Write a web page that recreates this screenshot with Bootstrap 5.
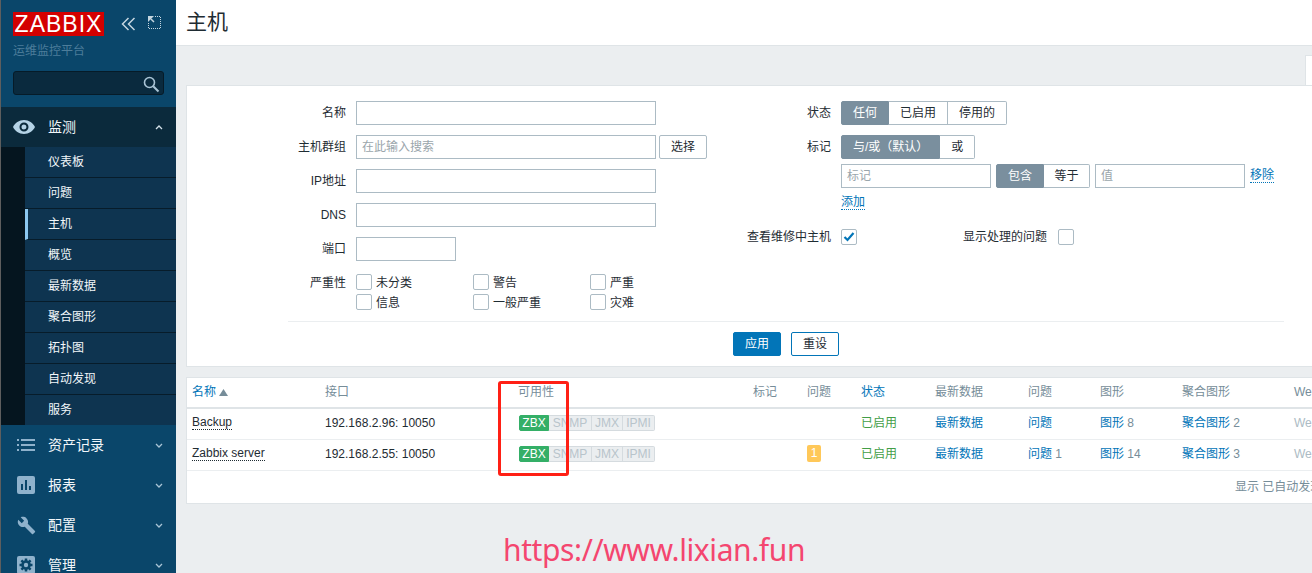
<!DOCTYPE html>
<html lang="zh-CN"><head><meta charset="utf-8"><title>主机</title>
<link href="https://cdn.jsdelivr.net/npm/bootstrap@5.3.0/dist/css/bootstrap.min.css" rel="stylesheet">
<style>
html,body{height:573px;overflow:hidden}
body{font-family:Arial,"Liberation Sans","Noto Sans CJK SC",sans-serif;font-size:12px;line-height:14px;color:#1f2c33;background:#ebeef0;position:relative}
a{text-decoration:none}
.shell{height:573px}
.side{width:176px;flex:none;background:#0a466a;color:#f2f7fa;border-left:1px solid #5e5e5e;height:573px;overflow:hidden}
.brand{height:107px;padding:12px 0 0 12px}
.logo{display:inline-block;background:#d40000;color:#fff;font-size:23px;line-height:24px;height:24px;width:91px;text-align:center;letter-spacing:1px}
.sub{color:#4d7d9a;font-size:12px;margin-top:8px;line-height:15px}
.sbox{width:151px;height:24px;margin-top:12px;background:#0a2a3e;border:1px solid #061b28;border-radius:3px;position:relative}
.sbox svg{position:absolute;right:3px;top:3px}
.tools{position:absolute;left:120px;top:16px}
.mhead{height:40px;display:flex;align-items:center;font-size:14px;color:#f2f7fa;padding-left:12px}
.mhead.on{background:#0b2a3c}
.mhead .ico{width:35px;flex:none;display:flex}
.mhead .car{margin-left:auto;margin-right:13px;display:flex}
.subwrap{background:#05151f;padding-left:24px}
.sitem{display:block;height:31px;line-height:30px;padding-left:23px;background:#0e3450;color:#f2f7fa;font-size:12px;border-bottom:1px solid #071c2a}
.sitem:last-child{border-bottom:0;height:30px}
.sitem.on{border-left:3px solid #8cc8f0;padding-left:20px}
.main{flex:1;min-width:0}
.topbar{height:46px;background:#fff;border-bottom:1px solid #dfe4e7;padding-left:10px;font-size:21px;line-height:44px;color:#1f2c33;font-weight:400}
.tabgap{height:39px;position:relative}
.tabcorner{position:absolute;right:0;top:9px;width:7px;height:31px;background:#fff;border-top:1px solid #dfe4e7;border-left:1px solid #dfe4e7}
.panel{margin-left:10px;background:#fff;border:1px solid #dfe4e7;border-right:0}
.filter{height:282px;position:relative}
.fcols{height:238px;padding-top:15px}
.fcol1{width:545px;flex:none}
.frow{display:flex;align-items:center;min-height:24px;margin-bottom:10px}
.flabel{width:169px;flex:none;text-align:right;padding-right:10px;color:#1f2c33}
.sevrow .flabel{line-height:19px}
.finput{height:24px;border:1px solid #acbbc4;background:#fff;padding:0 5px;line-height:23px;color:#9aa5ab;border-radius:0}
.w300{width:300px}.w100{width:100px}.w150{width:150px}
.gap5{margin-left:5px}
.bwhite{height:24px;border:1px solid #acbbc4;border-radius:2px;background:#fff;color:#1f2c33;padding:0 11px;line-height:22px;margin-left:3px}
.sevrow{margin-top:13px}
.sevs{display:grid;grid-template-columns:117px 117px 117px;row-gap:4px}
.sev{display:flex;align-items:flex-start;height:16px;line-height:19px}
.cb{width:16px;height:16px;border:1px solid #acbbc4;border-radius:2px;background:#fff;flex:none;display:block;margin-right:4px}
.fcol2 .flabel{width:109px}
.seg{display:flex;height:24px}
.seg span{display:block;border:1px solid #acbbc4;border-left:0;line-height:22px;padding:0 11px;background:#fff;color:#1f2c33;text-align:center}
.seg span.act{background:#7a8f9e;color:#fff;border-color:#7a8f9e;border-radius:2px 0 0 2px;border-left:1px solid #7a8f9e}
.seg span:last-child{border-radius:0 2px 2px 0}
.seg span.tight{padding:0 10.5px}
.r5{margin-bottom:5px}.r4{margin-bottom:8px}
.raddrow{min-height:14px;margin-bottom:15px}
.dash{color:#0275b8;border-bottom:1px dotted #0275b8;line-height:13px;display:inline-block}
.flab2{width:201px;padding-right:11px;margin-left:-4px;text-align:right}
.ffoot{position:absolute;left:101px;right:28px;top:235px;border-top:1px solid #ebeef0;display:flex;justify-content:center;gap:10px;padding-top:10px}
.bblue,.bout{height:24px;width:48px;border-radius:2px;border:1px solid #0275b8;line-height:22px;text-align:center;padding:0}
.bblue{background:#0275b8;color:#fff}
.bout{background:#fff;color:#1f2c33}
.results{margin-top:10px;height:127px;position:relative;overflow:hidden}
.gridt{width:1125px;table-layout:fixed;border-collapse:collapse}
.gridt th{height:30px;font-weight:400;color:#768d99;border-bottom:2px solid #dfe4e7;padding:0 0 2px 5px;white-space:nowrap;overflow:hidden}
.gridt td{height:31px;border-bottom:1px solid #ebeef0;padding:0 0 2px 5px;white-space:nowrap;overflow:hidden;color:#1f2c33}
.gridt .lnk,.lnk{color:#0275b8}.gridt .grn{color:#429e47}.gridt .ghost{color:#acbbc4}.gry{color:#768d99}
.nm{border-bottom:1px dotted #1f2c33;line-height:13px;display:inline-block}
.avail{display:flex;height:16px;line-height:14px;margin-left:1px}
.avail span{display:block;background:#ebeef0;border:1px solid #d5dbdf;border-left:0;color:#b8c4cb;text-align:center;font-size:12px}
.avail span:last-child{border-radius:0 2px 2px 0}
.avail span.zbx{background:#34af67;border-color:#34af67;color:#fff;border-radius:2px 0 0 2px;border-left:1px solid #34af67}
.aw30{width:30px}.aw43{width:43px}.aw31{width:31px}.aw32{width:32px}
.pbadge{display:block;width:14px;height:17px;background:#ffc859;border-radius:2px;color:#fff;text-align:center;line-height:17px}
.resfoot{position:absolute;right:0;top:94px;width:1125px;height:30px;line-height:30px;color:#768d99;padding-left:1048px;white-space:nowrap;overflow:hidden}
.redbox{position:absolute;left:498px;top:381px;width:71px;height:95px;border:3px solid #ff2015;border-radius:3px;z-index:5}
.wmark{position:absolute;left:503px;top:529px;font-size:30px;line-height:42px;letter-spacing:-.4px;color:#f4466f;font-family:"Noto Sans",sans-serif;z-index:5;white-space:nowrap}
</style></head><body>
<div class="d-flex shell">
<nav class="side position-relative">
 <div class="brand">
  <div class="logo">ZABBIX</div>
  <div class="sub">运维监控平台</div>
  <div class="sbox"><svg width="18" height="18" viewBox="0 0 18 18" fill="none" stroke="#a9c4d6" stroke-width="1.6"><circle cx="7.5" cy="7.5" r="5"/><path d="M11.2 11.2L16.5 16.5" stroke-width="2"/></svg></div>
 </div>
 <div class="tools d-flex gap-2"><svg width="15" height="16" viewBox="0 0 15 16" fill="none" stroke="#c5d6e0" stroke-width="1.5"><path d="M7.500 2L1.500 8l6 6M13.500 2l-6 6 6 6"/></svg><svg class="ms-1" width="13" height="13" viewBox="0 0 13 13" fill="none" stroke="#c5d6e0"><path d="M7 .5h5.500v12H.5V7" stroke-dasharray="1 1"/><path d="M0 0h6L0 6z" fill="#c5d6e0" stroke="none"/><path d="M3 3l3 3" stroke-width="1.500"/></svg></div>
 <div class="mhead on"><span class="ico"><svg width="22" height="14" viewBox="0 0 22 14"><path fill="#b5d3e6" fill-rule="evenodd" d="M11 0C6 0 2 3 0 7c2 4 6 7 11 7s9-3 11-7c-2-4-6-7-11-7zm0 2.500a4.500 4.500 0 1 1 0 9 4.500 4.500 0 0 1 0-9zm0 2a2.500 2.500 0 1 0 0 5 2.500 2.500 0 0 0 0-5z"/></svg></span>监测<span class="car"><svg width="8" height="5" viewBox="0 0 8 5" fill="none" stroke="#d5e2ea" stroke-width="1.300"><path d="M1 4l3-3 3 3"/></svg></span></div>
 <div class="subwrap">
  <a class="sitem">仪表板</a><a class="sitem">问题</a><a class="sitem on">主机</a><a class="sitem">概览</a><a class="sitem">最新数据</a><a class="sitem">聚合图形</a><a class="sitem">拓扑图</a><a class="sitem">自动发现</a><a class="sitem">服务</a>
 </div>
 <div class="mhead"><span class="ico ps-1"><svg width="18" height="12" viewBox="0 0 18 12" fill="#8fb2cc"><path d="M0 0h2v2H0zM4 0h14v2H4zM0 5h2v2H0zM4 5h14v2H4zM0 10h2v2H0zM4 10h14v2H4z"/></svg></span>资产记录<span class="car"><svg width="8" height="5" viewBox="0 0 8 5" fill="none" stroke="#a9c4d6" stroke-width="1.300"><path d="M1 1l3 3 3-3"/></svg></span></div>
 <div class="mhead"><span class="ico ps-1"><svg width="18" height="18" viewBox="0 0 18 18"><rect width="18" height="18" rx="2" fill="#8fb2cc"/><path fill="#0a466a" d="M4 8h2v6H4zM8 4h2v10H8zM12 10h2v4h-2z"/></svg></span>报表<span class="car"><svg width="8" height="5" viewBox="0 0 8 5" fill="none" stroke="#a9c4d6" stroke-width="1.300"><path d="M1 1l3 3 3-3"/></svg></span></div>
 <div class="mhead"><span class="ico ps-1"><svg width="19" height="19" viewBox="0 0 24 24" fill="#8fb2cc"><path d="M22.700 19l-9.100-9.100c.9-2.300.4-5-1.500-6.900-2-2-5-2.400-7.400-1.300L9 6 6 9 1.600 4.700C.4 7.100.9 10.100 2.900 12.100c1.900 1.900 4.600 2.400 6.900 1.500l9.100 9.100c.4.4 1 .4 1.400 0l2.300-2.300c.5-.4.5-1.100.1-1.400z"/></svg></span>配置<span class="car"><svg width="8" height="5" viewBox="0 0 8 5" fill="none" stroke="#a9c4d6" stroke-width="1.300"><path d="M1 1l3 3 3-3"/></svg></span></div>
 <div class="mhead"><span class="ico ps-1"><svg width="18" height="18" viewBox="0 0 18 18"><rect width="18" height="18" rx="2" fill="#8fb2cc"/><circle cx="9" cy="9" r="4.800" fill="#0a466a"/><path stroke="#0a466a" stroke-width="2.500" d="M9 2.500v13M2.500 9h13M4.400 4.400l9.200 9.200M13.600 4.400l-9.200 9.200"/><circle cx="9" cy="9" r="2.200" fill="#8fb2cc"/></svg></span>管理<span class="car"><svg width="8" height="5" viewBox="0 0 8 5" fill="none" stroke="#a9c4d6" stroke-width="1.300"><path d="M1 1l3 3 3-3"/></svg></span></div>
</nav>
<main class="main">
 <header class="topbar">主机</header>
 <div class="tabgap"><div class="tabcorner"></div></div>
 <section class="panel filter">
  <div class="d-flex fcols">
   <div class="fcol1">
    <div class="frow"><div class="flabel">名称</div><div class="finput w300"></div></div>
    <div class="frow"><div class="flabel">主机群组</div><div class="finput w300">在此输入搜索</div><div class="bwhite">选择</div></div>
    <div class="frow"><div class="flabel">IP地址</div><div class="finput w300"></div></div>
    <div class="frow"><div class="flabel">DNS</div><div class="finput w300"></div></div>
    <div class="frow"><div class="flabel">端口</div><div class="finput w100"></div></div>
    <div class="frow align-items-start sevrow"><div class="flabel">严重性</div>
     <div class="sevs">
      <div class="sev"><i class="cb"></i>未分类</div><div class="sev"><i class="cb"></i>警告</div><div class="sev"><i class="cb"></i>严重</div>
      <div class="sev"><i class="cb"></i>信息</div><div class="sev"><i class="cb"></i>一般严重</div><div class="sev"><i class="cb"></i>灾难</div>
     </div>
    </div>
   </div>
   <div class="fcol2">
    <div class="frow"><div class="flabel">状态</div><div class="seg"><span class="act">任何</span><span>已启用</span><span>停用的</span></div></div>
    <div class="frow r5"><div class="flabel">标记</div><div class="seg"><span class="act">与/或（默认）</span><span>或</span></div></div>
    <div class="frow r4"><div class="flabel"></div><div class="finput w150">标记</div><div class="seg gap5"><span class="act">包含</span><span class="tight">等于</span></div><div class="finput w150 gap5">值</div><a class="dash gap5">移除</a></div>
    <div class="frow raddrow"><div class="flabel"></div><a class="dash">添加</a></div>
    <div class="frow"><div class="flabel">查看维修中主机</div><i class="cb d-flex align-items-center justify-content-center"><svg width="12" height="10" viewBox="0 0 12 10" fill="none" stroke="#0275b8" stroke-width="2.200"><path d="M1.500 5l3 3 6-7"/></svg></i><div class="flab2">显示处理的问题</div><i class="cb"></i></div>
   </div>
  </div>
  <div class="ffoot"><button class="bblue" type="button">应用</button><button class="bout" type="button">重设</button></div>
 </section>
 <section class="panel results">
  <table class="gridt">
   <colgroup><col style="width:133px"><col style="width:193px"><col style="width:235px"><col style="width:54px"><col style="width:54px"><col style="width:74px"><col style="width:93px"><col style="width:72px"><col style="width:82px"><col style="width:112px"><col></colgroup>
   <thead><tr><th class="lnk">名称 <svg width="9" height="7" viewBox="0 0 9 7" class="align-baseline"><path d="M4.500 0L9 7H0z" fill="#768d99"/></svg></th><th>接口</th><th>可用性</th><th>标记</th><th>问题</th><th class="lnk">状态</th><th>最新数据</th><th>问题</th><th>图形</th><th>聚合图形</th><th>Web监测</th></tr></thead>
   <tbody>
    <tr><td><span class="nm">Backup</span></td><td>192.168.2.96: 10050</td><td><div class="avail"><span class="zbx aw30">ZBX</span><span class="aw43">SNMP</span><span class="aw31">JMX</span><span class="aw32">IPMI</span></div></td><td></td><td></td><td class="grn">已启用</td><td class="lnk">最新数据</td><td class="lnk">问题</td><td><a class="lnk">图形</a> <span class="gry">8</span></td><td><a class="lnk">聚合图形</a> <span class="gry">2</span></td><td class="ghost">Web监测</td></tr>
    <tr><td><span class="nm">Zabbix server</span></td><td>192.168.2.55: 10050</td><td><div class="avail"><span class="zbx aw30">ZBX</span><span class="aw43">SNMP</span><span class="aw31">JMX</span><span class="aw32">IPMI</span></div></td><td></td><td><span class="pbadge">1</span></td><td class="grn">已启用</td><td class="lnk">最新数据</td><td><a class="lnk">问题</a> <span class="gry">1</span></td><td><a class="lnk">图形</a> <span class="gry">14</span></td><td><a class="lnk">聚合图形</a> <span class="gry">3</span></td><td class="ghost">Web监测</td></tr>
   </tbody>
  </table>
  <div class="resfoot">显示 已自动发现的 1 - 2 共 2</div>
 </section>
</main>
</div>
<div class="redbox"></div>
<div class="wmark">https://www.lixian.fun</div>
<script src="https://cdn.jsdelivr.net/npm/bootstrap@5.3.0/dist/js/bootstrap.bundle.min.js"></script>
</body></html>
